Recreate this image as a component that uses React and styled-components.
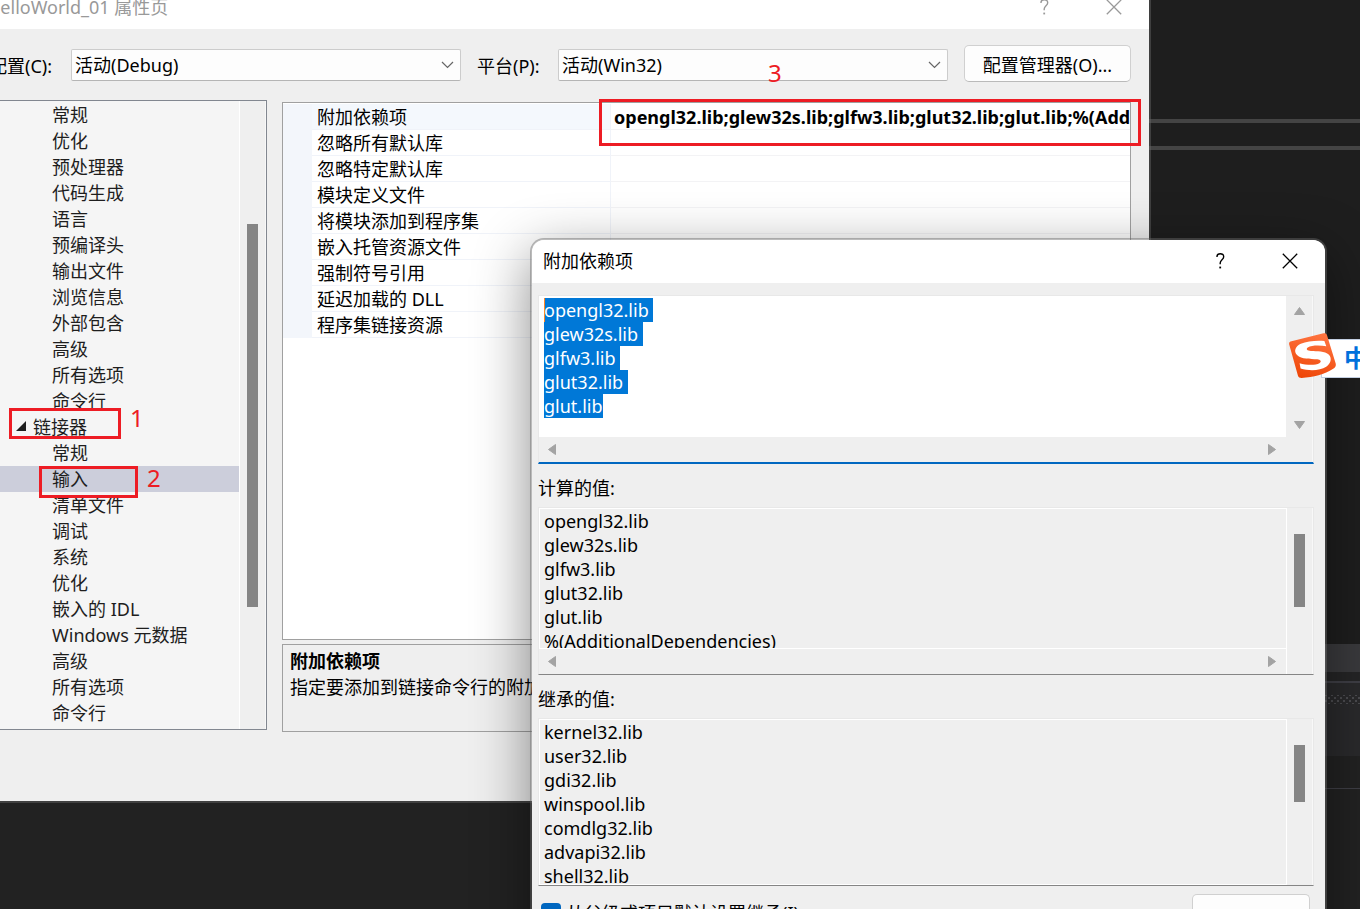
import { useEffect, useRef } from "react";
import styled, { createGlobalStyle } from "styled-components";

const treeItems = [
  "常规", "优化", "预处理器", "代码生成", "语言", "预编译头", "输出文件", "浏览信息",
  "外部包含", "高级", "所有选项", "命令行",
  { name: "链接器", root: true, step: 1 },
  "常规",
  { name: "输入", selected: true, step: 2 },
  "清单文件", "调试", "系统", "优化", "嵌入的 IDL", "Windows 元数据", "高级", "所有选项", "命令行",
].map(item => (typeof item === "string" ? { name: item } : item))

const properties = [
  { name: "附加依赖项", value: "opengl32.lib;glew32s.lib;glfw3.lib;glut32.lib;glut.lib;%(AdditionalDependencies)" },
  { name: "忽略所有默认库" },
  { name: "忽略特定默认库" },
  { name: "模块定义文件" },
  { name: "将模块添加到程序集" },
  { name: "嵌入托管资源文件" },
  { name: "强制符号引用" },
  { name: "延迟加载的 DLL" },
  { name: "程序集链接资源" },
]

const editedLibs = ["opengl32.lib", "glew32s.lib", "glfw3.lib", "glut32.lib", "glut.lib"]
const computedLibs = [...editedLibs, "%(AdditionalDependencies)"]
const inheritedLibs = ["kernel32.lib", "user32.lib", "gdi32.lib", "winspool.lib", "comdlg32.lib", "advapi32.lib", "shell32.lib"]

const GlobalStyle = createGlobalStyle`
  * {
    box-sizing: border-box;
  }
  body {
    margin: 0;
    overflow: hidden;
    background: #1e1e1e;
  }
  body, button, select, textarea, input {
    font-family: "Noto Sans", "Noto Sans CJK SC", sans-serif;
    font-size: 18px;
    color: #000;
  }
`

const Desktop = styled.div`
  position: relative;
  height: 100vh;
  overflow: hidden;
  background: #1e1e1e;
`

/* editor behind the dialogs */
const Band = styled.div`
  height: ${props => props.$height}px;
  background: ${props => props.$color};
`
const Dots = styled.div`
  height: 9px;
  background:
    radial-gradient(#4c4c50 1px, transparent 1px) 0 0 / 6px 6px,
    radial-gradient(#4c4c50 1px, transparent 1px) 3px 3px / 6px 6px,
    #2a2a2c;
`

const Window = styled.section`
  position: absolute;
  top: ${props => props.$top}px;
  left: ${props => props.$left}px;
  right: ${props => props.$right}px;
  border: 2px solid rgba(105, 105, 105, 0.45);
  border-radius: 14px;
  background: #efefef;
  background-clip: padding-box;
  box-shadow: ${props => (props.$active ? "0 16px 56px rgba(0, 0, 0, 0.45)" : "none")};
`
const TitleBar = styled.header`
  display: flex;
  align-items: center;
  height: 43px;
  padding: 0 0 2px ${props => props.$indent}px;
  border-radius: 12px 12px 0 0;
  background: #fff;
  color: ${props => (props.$active ? "#000" : "#999")};
`
const Title = styled.h1`
  flex: 1;
  margin: 0;
  font-size: 18px;
  font-weight: 400;
  line-height: 26px;
  white-space: nowrap;
`
const TitleButton = styled.button`
  display: flex;
  align-items: center;
  justify-content: center;
  width: 70px;
  height: 40px;
  padding: 0;
  border: 0;
  background: none;
  color: inherit;
`

const WindowBody = styled.div`
  padding: 16px 18px 69px 19px;
`
const Toolbar = styled.div`
  display: flex;
  align-items: center;
  gap: 16px;
  height: 40px;
`
const ToolbarLabel = styled.label`
  width: ${props => props.$width}px;
  white-space: nowrap;
`
const SelectBox = styled.div`
  position: relative;
  flex: 1;
  svg {
    position: absolute;
    right: 7px;
    top: 11px;
    pointer-events: none;
  }
`
const Select = styled.select`
  appearance: none;
  display: block;
  width: 100%;
  height: 32px;
  padding: 0 24px 0 3px;
  border: 1px solid #ccc;
  border-bottom-color: #b5b5b5;
  border-radius: 2px;
  background: #fdfdfd;
`
const Button = styled.button`
  align-self: flex-start;
  width: ${props => props.$width}px;
  height: 37px;
  padding: 0;
  border: 1px solid #d0d0d0;
  border-bottom-color: #bababa;
  border-radius: 5px;
  background: #fdfdfd;
  white-space: nowrap;
`

const Columns = styled.div`
  display: flex;
  align-items: flex-start;
  gap: 15px;
  margin-top: 15px;
`
const Tree = styled.div`
  display: flex;
  flex: none;
  width: 278px;
  border: 1px solid #828790;
  background: #f5f5f5;
`
const TreeList = styled.ul`
  flex: 1;
  margin: 0;
  padding: 1px 0 3px;
  list-style: none;
`
const TreeItem = styled.li`
  position: relative;
  display: flex;
  align-items: center;
  gap: 7px;
  height: 26px;
  padding: 0 0 2px ${props => (props.$root ? 26 : 62)}px;
  background: ${props => (props.$selected ? "#cccedb" : "transparent")};
  color: #1e1e1e;
  white-space: nowrap;
`

const ScrollTrack = styled.div`
  display: flex;
  flex-direction: column;
  align-items: center;
  width: 27px;
  border-left: 1px solid ${props => (props.$plain ? "#efefef" : "#fff")};
  border-right: 1px solid #f8f8f8;
  background: #efefef;
`
const Thumb = styled.div`
  width: 11px;
  height: ${props => props.$height}px;
  margin-top: ${props => props.$offset}px;
  background: #858585;
`

const Details = styled.div`
  position: relative;
  flex: 1;
  min-width: 0;
  padding-top: 2px;
`
const GridPanel = styled.div`
  height: 538px;
  padding-top: 1px;
  border: 1px solid #a0a0a0;
  background: #fff;
  overflow: hidden;
`
const Grid = styled.table`
  width: 100%;
  table-layout: fixed;
  border-collapse: separate;
  border-spacing: 0;
`
const Gutter = styled.td`
  width: 29px;
  padding: 0;
  background: #f3f6fb;
`
const NameCell = styled.th`
  width: 299px;
  height: 26px;
  padding: 2px 0 0 5px;
  border-right: 1px solid #f0f3f9;
  border-bottom: 1px solid #f0f3f9;
  background: ${props => (props.$selected ? "#f4f8fd" : "#fff")};
  font-weight: 400;
  line-height: 23px;
  text-align: left;
  white-space: nowrap;
`
const ValueCell = styled.td`
  padding: 2px 0 0 3px;
  border-bottom: 1px solid #f3f3f5;
  font-weight: 700;
  line-height: 23px;
  white-space: nowrap;
  overflow: hidden;
`
const Description = styled.div`
  height: 88px;
  margin-top: 4px;
  padding: 3px 7px;
  border: 1px solid #a0a0a0;
  line-height: 26px;
  white-space: nowrap;
  overflow: hidden;
  p {
    margin: 0;
  }
`

/* red pen marks */
const Mark = styled.span`
  position: absolute;
  top: ${props => props.$top}px;
  left: ${props => props.$left}px;
  right: ${props => props.$right}px;
  height: ${props => props.$height}px;
  border: 3px solid #ed1c24;
  z-index: 1;
`
const Step = styled.span`
  position: absolute;
  top: ${props => props.$top}px;
  left: ${props => props.$left}px;
  color: #ed1c24;
  font-size: 24px;
  line-height: 32px;
  z-index: 1;
`

const DialogBody = styled.div`
  padding: 12px 11px 24px 6px;
`
const Box = styled.div`
  display: grid;
  grid-template-columns: minmax(0, 1fr) 27px;
  border: 1px solid #e8e8e8;
  border-bottom: ${props => (props.$focused ? "2px solid #0067c0" : "1px solid #858585")};
  background: #efefef;
`
const TextWrap = styled.div`
  position: relative;
  border-left: 1px solid #fff;
  border-top: 1px solid #fff;
  border-bottom: 1px solid #fff;
`
const TextArea = styled.textarea`
  display: block;
  width: 100%;
  height: ${props => props.$height}px;
  padding: ${props => (props.$focused ? 1 : 0)}px 4px 0;
  border: 0;
  outline: 0;
  resize: none;
  overflow: hidden;
  background: ${props => (props.$focused ? "#fff" : "#efefef")};
  line-height: 24px;
  white-space: pre;
  &::selection {
    background: #0078d7;
    color: #fff;
  }
`
const Caret = styled.span`
  position: absolute;
  top: 1px;
  left: 4px;
  width: 1px;
  height: 24px;
  background: #ff8728;
`
const HScroll = styled.div`
  grid-column: 1;
  display: flex;
  align-items: center;
  justify-content: space-between;
  height: 25px;
  padding: 0 9px 0 8px;
`
const VScroll = styled(ScrollTrack)`
  grid-column: 2;
  grid-row: ${props => (props.$tall ? "1 / 3" : "1")};
`
const Arrows = styled.div`
  display: flex;
  flex-direction: column;
  justify-content: space-between;
  height: 142px;
  padding: 10px 0 8px;
`
const FieldLabel = styled.label`
  display: block;
  padding: 11px 0 6px;
  line-height: 26px;
`
const Footer = styled.div`
  display: flex;
  align-items: center;
  justify-content: space-between;
  padding: 8px 4px 0 3px;
`
const CheckLabel = styled.label`
  display: flex;
  align-items: center;
  gap: 5px;
  line-height: 26px;
`
const CheckWrap = styled.span`
  position: relative;
  display: flex;
  svg {
    position: absolute;
    left: 4px;
    top: 5px;
    pointer-events: none;
  }
`
const Checkbox = styled.input`
  appearance: none;
  width: 20px;
  height: 20px;
  margin: 0;
  border-radius: 4px;
  background: #0067c0;
`

const ImeBar = styled.aside`
  position: absolute;
  top: 333px;
  right: 0;
  display: flex;
  align-items: flex-start;
  width: 71px;
  svg {
    position: relative;
    flex: none;
    z-index: 1;
  }
`
const ImeMode = styled.div`
  flex: none;
  width: 52px;
  height: 39px;
  margin: 6px 0 0 -16px;
  padding-left: 22px;
  border: 1px solid #c3cfe2;
  background: #fff;
  color: #0070dc;
  font-size: 24px;
  font-weight: 700;
  line-height: 36px;
`

const CloseIcon = () => (
  <svg width="16" height="16" viewBox="0 0 16 16" fill="none" stroke="currentColor" strokeWidth="1.3">
    <path d="M0.8 0.8L15.2 15.2M15.2 0.8L0.8 15.2" />
  </svg>
)

const HelpIcon = () => (
  <svg width="9" height="16" viewBox="0 0 9 16" fill="none" stroke="currentColor" strokeWidth="1.4">
    <path d="M1 4V3.4C1 1.8 2.4 0.8 4.3 0.8C6.3 0.8 7.7 2 7.7 3.8C7.7 6.6 4.2 7 4.2 10V11.2" />
    <path d="M4.2 13.6V15.4" strokeWidth="1.8" />
  </svg>
)

const Chevron = () => (
  <svg width="13" height="10" viewBox="0 0 13 10" fill="none" stroke="#666" strokeWidth="1.2">
    <path d="M1 2L6.5 7.5L12 2" />
  </svg>
)

const arrowPaths = {
  up: "M5.5 1.5L10.5 8.5H0.5Z",
  down: "M0.5 1.5H10.5L5.5 8.5Z",
  left: "M8.5 0.5V10.5L1.5 5.5Z",
  right: "M1.5 0.5V10.5L8.5 5.5Z",
}
const Arrow = ({ dir }) => {
  const vertical = dir === "up" || dir === "down"
  return (
    <svg
      width={vertical ? 11 : 10}
      height={vertical ? 10 : 11}
      viewBox={vertical ? "0 0 11 10" : "0 0 10 11"}
      fill="#a3a3a3"
      stroke="#a3a3a3"
      strokeLinejoin="round"
    >
      <path d={arrowPaths[dir]} />
    </svg>
  )
}

const SogouLogo = () => (
  <svg width="48" height="46" viewBox="0 0 48 46">
    <defs>
      <linearGradient id="sogou" x1="0.6" y1="0" x2="0.3" y2="1">
        <stop offset="0" stopColor="#ff7440" />
        <stop offset="1" stopColor="#ee4607" />
      </linearGradient>
    </defs>
    <path
      d="M2.5 8.2L34.5 0.3C36.2 0 37.4 0.6 38 2.2L46.7 30.5C47.2 33 46.3 34.3 44.2 35.8C35.5 41.5 24.5 44.4 12.6 45C10.6 45 9.5 44.4 8.9 42.6L0.2 11.5C-0.2 9.7 0.6 8.6 2.5 8.2Z"
      fill="url(#sogou)"
    />
    <path
      d="M35.4 7.9L37.3 13.2C31 12.2 22.5 12.1 18.8 14.4C16.6 16 18.1 17.7 22 17.9C28 18.2 35.8 17.6 40 21.7C43.2 25.2 41.8 30.6 37.2 33.8C31.2 37.8 20 38 11.6 35.6L10.6 30.2C17 32 26.2 32.6 30.4 30.2C33 28.6 31.6 26.6 28.2 26.3C21.2 25.8 12.6 26.4 8 22C4.4 18.4 6.3 13.4 11.8 10.8C18 7.9 27.4 7.4 35.4 7.9Z"
      fill="#fff"
    />
  </svg>
)

const WindowTitle = ({ children, active, indent }) => (
  <TitleBar $active={active} $indent={indent}>
    <Title>{children}</Title>
    <TitleButton type="button" aria-label="帮助"><HelpIcon /></TitleButton>
    <TitleButton type="button" aria-label="关闭"><CloseIcon /></TitleButton>
  </TitleBar>
)

const PropertyPages = () => (
  <Window $top={-16} $left={-32} $right={209}>
    <WindowTitle indent={17}>HelloWorld_01 属性页</WindowTitle>
    <WindowBody>
      <Toolbar>
        <ToolbarLabel htmlFor="config" $width={66}>配置(C):</ToolbarLabel>
        <SelectBox>
          <Select id="config"><option>活动(Debug)</option></Select>
          <Chevron />
        </SelectBox>
        <ToolbarLabel htmlFor="platform" $width={65}>平台(P):</ToolbarLabel>
        <SelectBox>
          <Select id="platform"><option>活动(Win32)</option></Select>
          <Chevron />
        </SelectBox>
        <Button type="button" $width={167}>配置管理器(O)...</Button>
      </Toolbar>
      <Columns>
        <Tree>
          <TreeList>
            {treeItems.map((item, index) => (
              <TreeItem key={index} $root={item.root} $selected={item.selected}>
                {item.root && (
                  <svg width="10" height="10" viewBox="0 0 10 10"><path d="M10 0V10H0Z" fill="#1e1e1e" /></svg>
                )}
                {item.name}
                {item.step === 1 && (
                  <>
                    <Mark $top={-6} $left={19} $right={118} $height={31} />
                    <Step $top={-12} $left={140}>1</Step>
                  </>
                )}
                {item.step === 2 && (
                  <>
                    <Mark $top={0} $left={49} $right={101} $height={32} />
                    <Step $top={-4} $left={157}>2</Step>
                  </>
                )}
              </TreeItem>
            ))}
          </TreeList>
          <ScrollTrack>
            <Thumb $height={383} $offset={123} />
          </ScrollTrack>
        </Tree>
        <Details>
          <GridPanel>
            <Grid>
              <tbody>
                {properties.map((property, index) => (
                  <tr key={property.name}>
                    <Gutter />
                    <NameCell scope="row" $selected={index === 0}>{property.name}</NameCell>
                    <ValueCell>{property.value}</ValueCell>
                  </tr>
                ))}
              </tbody>
            </Grid>
          </GridPanel>
          <Description>
            <p><b>附加依赖项</b></p>
            <p>指定要添加到链接命令行的附加项。</p>
          </Description>
          <Mark $top={-1} $left={317} $right={-10} $height={47} />
          <Step $top={-43} $left={486}>3</Step>
        </Details>
      </Columns>
    </WindowBody>
  </Window>
)

const DependenciesDialog = () => {
  const editor = useRef(null)

  useEffect(() => {
    editor.current.focus()
    editor.current.select()
  }, [])

  return (
    <Window $active $top={238} $left={530} $right={33}>
      <WindowTitle active indent={11}>附加依赖项</WindowTitle>
      <DialogBody>
        <Box $focused>
          <TextWrap>
            <TextArea
              ref={editor}
              $focused
              $height={139}
              aria-label="附加依赖项"
              spellCheck={false}
              defaultValue={editedLibs.join("\n")}
            />
            <Caret />
          </TextWrap>
          <VScroll $tall $plain>
            <Arrows>
              <Arrow dir="up" />
              <Arrow dir="down" />
            </Arrows>
          </VScroll>
          <HScroll>
            <Arrow dir="left" />
            <Arrow dir="right" />
          </HScroll>
        </Box>
        <FieldLabel htmlFor="computed">计算的值:</FieldLabel>
        <Box>
          <TextWrap>
            <TextArea id="computed" readOnly $height={139} spellCheck={false} value={computedLibs.join("\n")} />
          </TextWrap>
          <VScroll $tall>
            <Thumb $height={73} $offset={26} />
          </VScroll>
          <HScroll>
            <Arrow dir="left" />
            <Arrow dir="right" />
          </HScroll>
        </Box>
        <FieldLabel htmlFor="inherited">继承的值:</FieldLabel>
        <Box>
          <TextWrap>
            <TextArea id="inherited" readOnly $height={164} spellCheck={false} value={inheritedLibs.join("\n")} />
          </TextWrap>
          <VScroll>
            <Thumb $height={57} $offset={26} />
          </VScroll>
        </Box>
        <Footer>
          <CheckLabel>
            <CheckWrap>
              <Checkbox type="checkbox" defaultChecked />
              <svg width="12" height="10" viewBox="0 0 12 10" fill="none" stroke="#fff" strokeWidth="1.5">
                <path d="M1 5L4.5 8.5L11 1.5" />
              </svg>
            </CheckWrap>
            从父级或项目默认设置继承(I)
          </CheckLabel>
          <Button type="button" aria-label="宏" $width={118} />
        </Footer>
      </DialogBody>
    </Window>
  )
}

const App = () => {
  return (
    <Desktop>
      <GlobalStyle />
      <Band $height={119} $color="#1e1e1e" />
      <Band $height={4} $color="#444" />
      <Band $height={23} $color="#1e1e1e" />
      <Band $height={4} $color="#444" />
      <Band $height={494} $color="#1e1e1e" />
      <Band $height={28} $color="#3a3a3d" />
      <Band $height={9} $color="#252526" />
      <Band $height={2} $color="#3f3f46" />
      <Band $height={12} $color="#2a2a2c" />
      <Dots />
      <Band $height={52} $color="#2a2a2c" />
      <Band $height={32} $color="#222" />
      <Band $height={1} $color="#3f3f46" />
      <Band $height={120} $color="#222" />
      <PropertyPages />
      <DependenciesDialog />
      <ImeBar>
        <SogouLogo />
        <ImeMode>中</ImeMode>
      </ImeBar>
    </Desktop>
  );
}

export default App;
